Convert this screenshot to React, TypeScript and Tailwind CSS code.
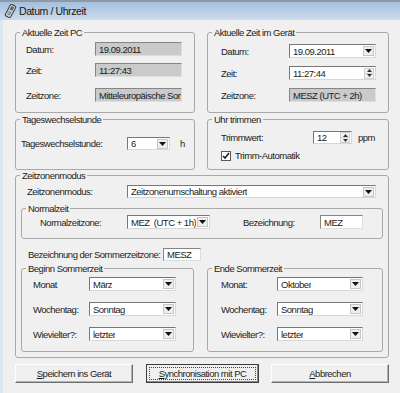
import React from "react";

type Kids = { children?: React.ReactNode };

function Down() {
  return (
    <svg width="7" height="4" viewBox="0 0 7 4">
      <path d="M0 0h7L3.5 4z" fill="#111" />
    </svg>
  );
}

function Field({ value, className, gray }: { value: string; className: string; gray?: boolean }) {
  return (
    <div
      className={`${className} flex items-center overflow-hidden border border-t-[#858585] border-l-[#858585] border-r-[#dedede] border-b-[#dedede] pl-[3px] ${
        gray ? "bg-[#cacaca]" : "bg-white"
      }`}
    >
      <span className="whitespace-pre">{value}</span>
    </div>
  );
}

function Combo({ value, className }: { value: string; className: string }) {
  return (
    <div
      className={`${className} flex items-center justify-between border border-t-[#767676] border-l-[#767676] border-r-[#d8d8d8] border-b-[#d8d8d8] bg-white pl-[3px] pr-[1px]`}
    >
      <span className="overflow-hidden whitespace-pre">{value}</span>
      <div className="flex h-[10px] w-[11px] shrink-0 items-center justify-center border border-[#c6c6c6] bg-[#eeeeee]">
        <Down />
      </div>
    </div>
  );
}

function Spin({ value, className }: { value: string; className: string }) {
  return (
    <div
      className={`${className} flex items-center justify-between border border-t-[#767676] border-l-[#767676] border-r-[#d8d8d8] border-b-[#d8d8d8] bg-white pl-[3px] pr-[1px]`}
    >
      <span>{value}</span>
      <div className="flex h-[11px] w-[10px] shrink-0 flex-col border border-[#d0d0d0] bg-[#f2f2f2]">
        <div className="flex flex-1 items-center justify-center border-b border-[#d0d0d0]">
          <svg width="5" height="3" viewBox="0 0 5 3">
            <path d="M0 3h5L2.5 0z" fill="#333" />
          </svg>
        </div>
        <div className="flex flex-1 items-center justify-center">
          <svg width="5" height="3" viewBox="0 0 5 3">
            <path d="M0 0h5L2.5 3z" fill="#333" />
          </svg>
        </div>
      </div>
    </div>
  );
}

function Group({ title, className, children }: { title: string; className: string } & Kids) {
  return (
    <fieldset className={`${className} min-w-0 rounded-[3px] border border-[#a9a9a9]`}>
      <legend className="ml-[4px] px-[2px] leading-[11px]">{title}</legend>
      {children}
    </fieldset>
  );
}

function TitleBar() {
  return (
    <div className="flex h-[20px] items-center border-t-[2px] border-[#8d99a5] bg-gradient-to-b from-[#a4bfdd] to-[#cddcee] pl-[4px]">
      <svg width="13" height="14" viewBox="0 0 13 14">
        <g transform="rotate(28 6.5 7)">
          <rect x="3.5" y="0.5" width="6" height="13" rx="1.5" fill="#c9ced3" stroke="#3c434a" />
          <rect x="5" y="2" width="3" height="4" fill="#5b6670" />
          <rect x="5" y="8" width="3" height="1" fill="#5b6670" />
          <rect x="5" y="10" width="3" height="1" fill="#5b6670" />
        </g>
      </svg>
      <span className="ml-[2px] text-[10.5px] tracking-[-0.4px] text-[#151515]">Datum / Uhrzeit</span>
    </div>
  );
}

function Btn({ children, main, className }: { main?: boolean; className: string } & Kids) {
  if (main) {
    return (
      <div className={`${className} flex h-[19px] border border-[#3c3c3c] bg-[#f0f0f0] p-[2px] shadow-[inset_-1px_-1px_0_#8a8a8a]`}>
        <div className="flex flex-1 items-center justify-center border border-dotted border-[#444]">{children}</div>
      </div>
    );
  }
  return (
    <div
      className={`${className} flex h-[19px] items-center justify-center border border-t-white border-l-white border-r-[#6e6e6e] border-b-[#6e6e6e] bg-[#f0f0f0] shadow-[inset_-1px_-1px_0_#b4b4b4]`}
    >
      {children}
    </div>
  );
}

export default function App() {
  return (
    <div className="h-[393px] w-[400px] overflow-hidden bg-[#f0f0f0] font-['Liberation_Sans',Arial,sans-serif] text-[9.5px] leading-[11px] tracking-[-0.5px] text-[#1c1c1c]">
      <TitleBar />
      <div className="flex h-[373px] flex-col border-l-[3px] border-[#dde7f2] pl-[12px] pr-[11px]">
        {/* Zeit PC / Gerät */}
        <div className="mt-[7px] flex gap-[12px]">
          <Group title="Aktuelle Zeit PC" className="h-[86px] w-[180px]">
            <div className="flex flex-col pl-[10px]">
              <div className="mt-[4px] flex items-center">
                <span className="w-[69px]">Datum:</span>
                <Field gray value="19.09.2011" className="h-[14px] w-[87px]" />
              </div>
              <div className="mt-[7px] flex items-center">
                <span className="w-[69px]">Zeit:</span>
                <Field gray value="11:27:43" className="h-[14px] w-[87px]" />
              </div>
              <div className="mt-[11px] flex items-center">
                <span className="w-[69px]">Zeitzone:</span>
                <Field gray value="Mitteleuropäische Sommerzeit" className="h-[14px] w-[87px]" />
              </div>
            </div>
          </Group>
          <Group title="Aktuelle Zeit im Gerät" className="h-[86px] w-[182px]">
            <div className="flex flex-col pl-[13px]">
              <div className="mt-[6px] flex items-center">
                <span className="w-[68px]">Datum:</span>
                <Combo value="19.09.2011" className="h-[14px] w-[87px]" />
              </div>
              <div className="mt-[8px] flex items-center">
                <span className="w-[68px]">Zeit:</span>
                <Spin value="11:27:44" className="h-[14px] w-[87px]" />
              </div>
              <div className="mt-[8px] flex items-center">
                <span className="w-[68px]">Zeitzone:</span>
                <Field gray value="MESZ (UTC + 2h)" className="h-[14px] w-[87px]" />
              </div>
            </div>
          </Group>
        </div>

        {/* Tageswechsel / Trimmen */}
        <div className="mt-[1px] flex gap-[12px]">
          <Group title="Tageswechselstunde" className="h-[56px] w-[180px]">
            <div className="mt-[12px] flex items-center pl-[5px]">
              <span className="w-[106px]">Tageswechselstunde:</span>
              <Combo value="6" className="h-[13px] w-[43px]" />
              <span className="ml-[10px]">h</span>
            </div>
          </Group>
          <Group title="Uhr trimmen" className="h-[56px] w-[182px]">
            <div className="flex flex-col pl-[13px]">
              <div className="mt-[6px] flex items-center">
                <span className="w-[92px]">Trimmwert:</span>
                <Spin value="12" className="h-[13px] w-[39px]" />
                <span className="ml-[6px]">ppm</span>
              </div>
              <div className="mt-[6px] flex items-center">
                <div className="flex h-[10px] w-[10px] items-center justify-center border border-[#5a5a5a] bg-white">
                  <svg width="8" height="8" viewBox="0 0 8 8">
                    <path d="M1 4l2 2 4-5" fill="none" stroke="#222" strokeWidth="1.6" />
                  </svg>
                </div>
                <span className="ml-[4px]">Trimm-Automatik</span>
              </div>
            </div>
          </Group>
        </div>

        {/* Zeitzonenmodus */}
        <Group title="Zeitzonenmodus" className="h-[188px] w-[374px]">
          <div className="flex flex-col px-[5px]">
            <div className="mt-[4px] flex items-center pl-[6px]">
              <span className="w-[100px]">Zeitzonenmodus:</span>
              <Combo value="Zeitzonenumschaltung aktiviert" className="h-[13px] w-[249px]" />
            </div>
            <Group title="Normalzeit" className="mt-[5px] h-[36px] w-[362px]">
              <div className="mt-[1px] flex items-center pl-[18px]">
                <span className="w-[87px]">Normalzeitzone:</span>
                <Combo value="MEZ  (UTC + 1h)" className="h-[14px] w-[83px]" />
                <span className="ml-[33px] w-[77px]">Bezeichnung:</span>
                <Field value="MEZ" className="h-[14px] w-[43px]" />
              </div>
            </Group>
            <div className="mt-[9px] flex items-center pl-[7px]">
              <span className="w-[135px]">Bezeichnung der Sommerzeitzone:</span>
              <Field value="MESZ" className="h-[13px] w-[38px]" />
            </div>
            <div className="mt-[2px] flex gap-[13px]">
              <Group title="Beginn Sommerzeit" className="h-[89px] w-[173px]">
                <div className="flex flex-col pl-[11px]">
                  <div className="mt-[3px] flex items-center">
                    <span className="w-[56px]">Monat</span>
                    <Combo value="März" className="h-[14px] w-[87px]" />
                  </div>
                  <div className="mt-[11px] flex items-center">
                    <span className="w-[56px]">Wochentag:</span>
                    <Combo value="Sonntag" className="h-[14px] w-[87px]" />
                  </div>
                  <div className="mt-[11px] flex items-center">
                    <span className="w-[56px]">Wievielter?:</span>
                    <Combo value="letzter" className="h-[14px] w-[87px]" />
                  </div>
                </div>
              </Group>
              <Group title="Ende Sommerzeit" className="h-[89px] w-[176px]">
                <div className="flex flex-col pl-[13px]">
                  <div className="mt-[3px] flex items-center">
                    <span className="w-[56px]">Monat:</span>
                    <Combo value="Oktober" className="h-[14px] w-[86px]" />
                  </div>
                  <div className="mt-[11px] flex items-center">
                    <span className="w-[56px]">Wochentag:</span>
                    <Combo value="Sonntag" className="h-[14px] w-[86px]" />
                  </div>
                  <div className="mt-[11px] flex items-center">
                    <span className="w-[56px]">Wievielter?:</span>
                    <Combo value="letzter" className="h-[14px] w-[86px]" />
                  </div>
                </div>
              </Group>
            </div>
          </div>
        </Group>

        {/* Buttons */}
        <div className="mt-[6px] flex gap-[13px]">
          <Btn className="w-[118px]">
            <span>
              <span className="underline">S</span>peichern ins Gerät
            </span>
          </Btn>
          <Btn main className="w-[113px]">
            <span>
              <span className="underline">S</span>ynchronisation mit PC
            </span>
          </Btn>
          <Btn className="ml-[-1px] w-[118px]">
            <span>
              <span className="underline">A</span>bbrechen
            </span>
          </Btn>
        </div>
      </div>
    </div>
  );
}
